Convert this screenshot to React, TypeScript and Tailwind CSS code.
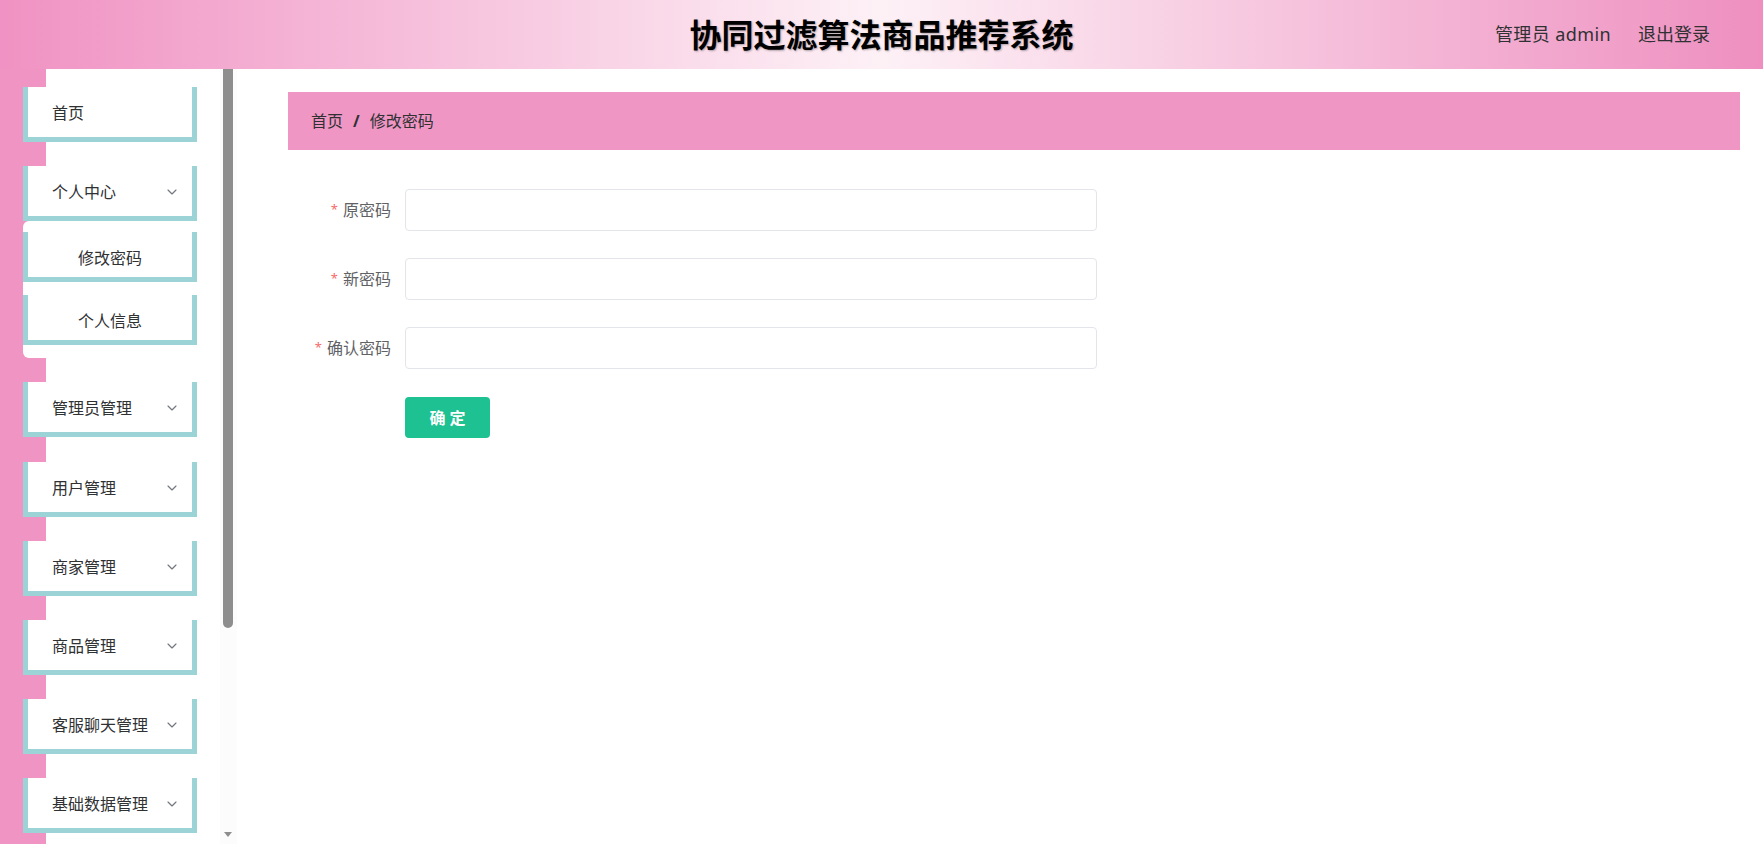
import { ChevronDown } from 'lucide-react';

const FONT = '"Noto Sans", "Noto Sans CJK SC", sans-serif';

type MenuItem = {
  label: string;
  children?: string[];
  open?: boolean;
};

const MENU: MenuItem[] = [
  { label: '首页' },
  { label: '个人中心', children: ['修改密码', '个人信息'], open: true },
  { label: '管理员管理', children: [] },
  { label: '用户管理', children: [] },
  { label: '商家管理', children: [] },
  { label: '商品管理', children: [] },
  { label: '客服聊天管理', children: [] },
  { label: '基础数据管理', children: [] },
];

const FIELDS = ['原密码', '新密码', '确认密码'];

function MenuRow({ item }: { item: MenuItem }) {
  return (
    <div className="flex flex-col">
      <div className="ml-[23px] flex h-[55px] w-[174px] items-center justify-between border-x-[5px] border-b-[5px] border-[#9bd3d7] bg-white pl-[24px] pr-[12px] pt-[2px] text-[16px] text-[#303133]">
        <span>{item.label}</span>
        {item.children && <ChevronDown size={16} strokeWidth={1.75} color="#73767c" />}
      </div>
      {item.open && item.children && (
        <div className="ml-[23px] flex w-[190px] flex-col gap-[13px] rounded-[6px] bg-white pt-[11px] pb-[13px]">
          {item.children.map((child) => (
            <div
              key={child}
              className="flex h-[50px] w-[174px] items-center justify-center border-x-[5px] border-b-[5px] border-[#9bd3d7] bg-white pt-[6px] text-[16px] text-[#303133]"
            >
              {child}
            </div>
          ))}
        </div>
      )}
    </div>
  );
}

function Sidebar() {
  return (
    <aside className="flex h-full w-[237px] shrink-0">
      <nav className="flex h-full w-[220px] flex-col gap-[24.2px] overflow-hidden bg-[linear-gradient(to_right,#ef94c3_0,#ef94c3_46px,#ffffff_46px)] pt-[18px]">
        {MENU.map((item) => (
          <MenuRow key={item.label} item={item} />
        ))}
      </nav>
      {/* scroll track */}
      <div className="flex h-full w-[17px] flex-col justify-between bg-[#fcfcfc] pb-[7px]">
        <div className="ml-[3px] h-[559px] w-[10px] rounded-b-[5px] bg-[#8e8e8e]" />
        <div className="ml-[4px] h-0 w-0 border-x-[4px] border-t-[5px] border-x-transparent border-t-[#8e8e8e]" />
      </div>
    </aside>
  );
}

function Header() {
  return (
    <header className="grid h-[69px] shrink-0 grid-cols-[1fr_auto_1fr] items-center bg-[linear-gradient(90deg,#f092c3_0%,#fdf1f6_50%,#ee8fc0_100%)]">
      <div />
      <h1 className="text-[32px] font-bold text-black [text-shadow:1px_1px_2px_rgba(0,0,0,0.3)]">
        协同过滤算法商品推荐系统
      </h1>
      <div className="flex items-center justify-end gap-[27px] pr-[53px] text-[18px] text-[#303133]">
        <span className="tracking-[0.4px]">管理员 admin</span>
        <span>退出登录</span>
      </div>
    </header>
  );
}

function PasswordForm() {
  return (
    <form className="mt-[39px] flex flex-col gap-[27px]" onSubmit={(e) => e.preventDefault()}>
      {FIELDS.map((label) => (
        <div key={label} className="flex items-center">
          <label className="w-[117px] pr-[14px] text-right text-[16px] text-[#606266]">
            <span className="relative -top-[2px] mr-[5px] text-[13px] text-[#f56c6c]">*</span>
            {label}
          </label>
          <input
            type="password"
            className="h-[42px] w-[692px] rounded-[4px] border border-[#e2e5ea] bg-white px-[15px] outline-none"
          />
        </div>
      ))}
      <div className="pl-[117px] pt-px">
        <button
          type="submit"
          className="h-[41px] w-[85px] rounded-[4px] bg-[#1ec191] text-[16px] font-bold text-white"
        >
          确 定
        </button>
      </div>
    </form>
  );
}

export default function App() {
  return (
    <div className="flex h-[844px] flex-col overflow-hidden bg-white" style={{ fontFamily: FONT }}>
      <Header />
      <div className="flex min-h-0 flex-1">
        <Sidebar />
        <main className="flex-1 pt-[23px] pl-[51px] pr-[23px]">
          <div className="flex h-[58px] items-center bg-[#ef96c5] pl-[23px] text-[16px] text-[#303133]">
            <span>首页</span>
            <span className="mx-[10px] font-bold text-[#303133]">/</span>
            <span>修改密码</span>
          </div>
          <PasswordForm />
        </main>
      </div>
    </div>
  );
}
